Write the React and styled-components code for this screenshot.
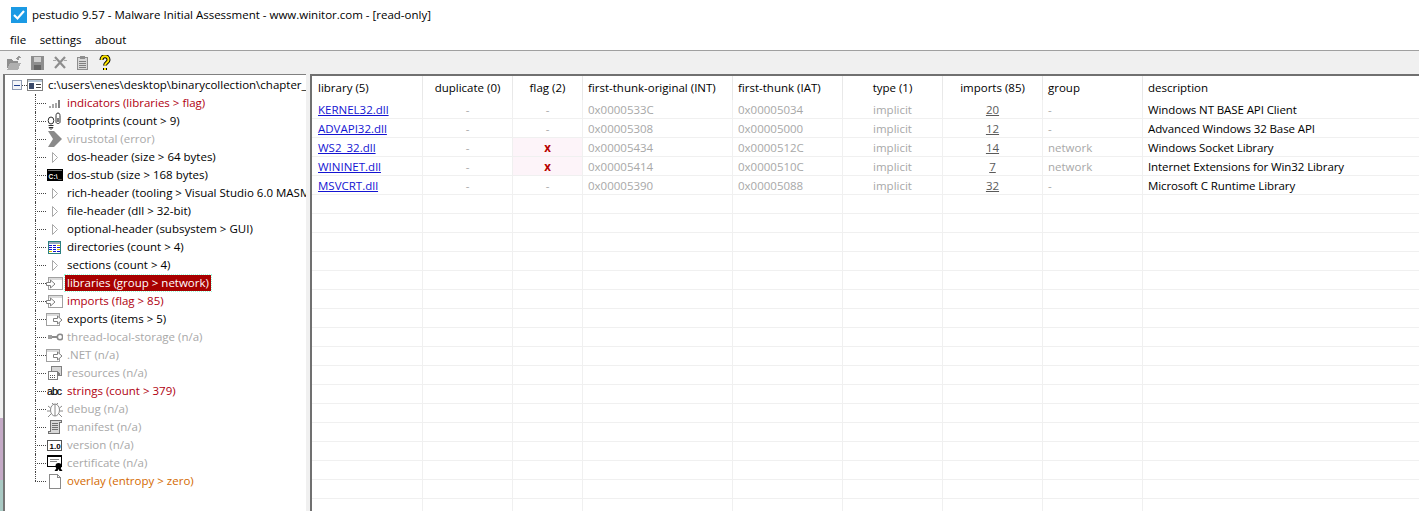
import React from 'react';
import styled, { createGlobalStyle } from 'styled-components';

const GlobalStyle = createGlobalStyle`
  html, body {
    margin: 0;
    padding: 0;
    background: #f0f0f0;
  }
  body {
    font-family: "Open Sans", "Liberation Sans", sans-serif;
    font-size: 11.5px;
    color: #000;
  }
  svg {
    display: block;
    flex: none;
  }
`;

const Window = styled.div`
  display: flex;
  flex-direction: column;
  height: 100vh;
  overflow: hidden;
`;

const TitleBar = styled.div`
  display: flex;
  align-items: center;
  gap: 5px;
  height: 30px;
  padding: 0 0 1px 11px;
  box-sizing: border-box;
  background: #fff;
  font-size: 11.5px;
`;

const MenuBar = styled.div`
  display: flex;
  gap: 13.5px;
  height: 20px;
  box-sizing: border-box;
  padding: 0 0 2px 10px;
  align-items: center;
  background: #fff;
`;

const Toolbar = styled.div`
  display: flex;
  align-items: center;
  height: 23px;
  padding-left: 3px;
  border-top: 1px solid #a0a0a0;
  background: #f0f0f0;
`;

const ToolButton = styled.span`
  display: flex;
  justify-content: center;
  width: 22.75px;
`;

// the 3px strip on the left shows the desktop colours behind the window
const Panes = styled.div`
  flex: 1;
  display: flex;
  gap: 4px;
  min-height: 0;
  padding-left: 3px;
  background:
    linear-gradient(to bottom, #f0f0f0 344px, #c4aac6 344px, #c4aac6 406px, #a9c9c3 406px) left top / 3px 100% no-repeat,
    #f0f0f0;
`;

const TreePane = styled.div`
  width: 301px;
  flex: none;
  padding-top: 1px;
  background: #fff;
  border-top: 1px solid #808080;
  border-left: 2px solid #757575;
  overflow: hidden;
`;

const TreeRow = styled.div`
  display: flex;
  align-items: center;
  height: 18px;
  white-space: nowrap;
`;

const RootRow = styled(TreeRow)`
  padding-left: 7px;
`;

const Expander = styled.span`
  display: flex;
  align-items: center;
  justify-content: center;
  flex: none;
  box-sizing: border-box;
  width: 10px;
  height: 10px;
  border: 1px solid #8f9bb3;
  background: #f2f4f8;

  &::after {
    content: '';
    width: 6px;
    height: 1px;
    background: #1f3f8f;
  }
`;

const RootStub = styled.span`
  flex: none;
  width: 5px;
  border-top: 1px dotted #444;
`;

const Branch = styled.span`
  position: relative;
  flex: none;
  align-self: stretch;
  width: 11px;
  margin-left: 30px;

  &::before {
    content: '';
    position: absolute;
    left: 0;
    top: 0;
    height: ${props => (props.$last ? '9px' : '18px')};
    border-left: 1px dotted #444;
  }

  &::after {
    content: '';
    position: absolute;
    left: 0;
    right: 0;
    top: 9px;
    border-top: 1px dotted #444;
  }
`;

const IconSlot = styled.span`
  display: flex;
  align-items: center;
  justify-content: center;
  flex: none;
  width: 17px;
  height: 18px;
  margin-right: 2px;
`;

const toneColors = {
  normal: '#000',
  red: '#b00010',
  muted: '#a8a8a8',
  orange: '#d46a00',
};

const TreeLabel = styled.span`
  box-sizing: border-box;
  padding: 0 2px;
  line-height: 16px;
  color: ${props => (props.$selected ? '#fff' : toneColors[props.$tone])};
  background: ${props => (props.$selected ? '#a80000' : 'transparent')};
  outline: ${props => (props.$selected ? '1px dotted #9fd' : 'none')};
`;

const RootLabel = styled.span`
  margin-left: 5px;
  line-height: 16px;
`;

const TablePane = styled.div`
  flex: 1;
  min-width: 0;
  background: #fff;
  border-top: 2px solid #707070;
  border-left: 2px solid #707070;
  overflow: hidden;
`;

const columnTemplate = '110px 90px 70px 150px 110px 100px 100px 100px 1fr';

const HeaderRow = styled.div`
  display: grid;
  grid-template-columns: ${columnTemplate};
  height: 24px;
`;

const HeaderCell = styled.div`
  display: flex;
  align-items: center;
  justify-content: ${props => (props.$center ? 'center' : 'flex-start')};
  padding: 0 0 2px ${props => (props.$center ? '0' : '5px')};
  border-left: 1px solid #e8e8e8;
  white-space: nowrap;
  overflow: hidden;

  &:first-child {
    border-left: none;
    padding-left: 6px;
  }
`;

const BodyRow = styled.div`
  display: grid;
  grid-template-columns: ${columnTemplate};
  box-sizing: border-box;
  height: 19px;
  border-bottom: 1px solid #f0f0f0;
`;

const Cell = styled.div`
  display: flex;
  align-items: center;
  justify-content: ${props => (props.$center ? 'center' : 'flex-start')};
  padding-left: ${props => (props.$center ? '0' : '5px')};
  border-left: 1px solid #f0f0f0;
  color: ${props => (props.$dark ? '#000' : '#a8a8a8')};
  background: ${props => (props.$flagged ? '#fdf4f9' : 'transparent')};
  white-space: nowrap;
  overflow: hidden;

  &:first-child {
    border-left: none;
    padding-left: 6px;
  }
`;

const DescriptionText = styled.span`
  letter-spacing: -0.1px;
`;

const LibraryLink = styled.span`
  color: #1414d2;
  text-decoration: underline;
`;

const ImportCount = styled.span`
  color: #5a5a5a;
  text-decoration: underline;
`;

const FlagMark = styled.span`
  color: #b80000;
  font-weight: 700;
`;

const Svg = ({ w = 16, h = 16, children }) => (
  <svg width={w} height={h} viewBox={`0 0 ${w} ${h}`} shapeRendering="crispEdges">
    {children}
  </svg>
);

// window with the arrow coming in from the left
const WindowIn = () => (
  <Svg w={17} h={15}>
    <path d="M2.500 1.500h14v12h-14z" fill="#fff" stroke="#a0a0a0" />
    <path d="M3 2h13v2H3z" fill="#dcdcdc" />
    <path d="M.5 6.500h4V4L9 8l-4.500 4V9.500h-4z" fill="#fff" stroke="#808080" shapeRendering="auto" />
  </Svg>
);

// window with the arrow leaving on the right
const WindowOut = () => (
  <Svg w={17} h={15}>
    <path d="M.5 1.500h13v12H.5z" fill="#fff" stroke="#a0a0a0" />
    <path d="M1 2h12v2H1z" fill="#dcdcdc" />
    <path d="M7.500 6.500h4V4L16 8l-4.500 4V9.500h-4z" fill="#fff" stroke="#808080" shapeRendering="auto" />
  </Svg>
);

const treeIcons = {
  indicators: () => (
    <Svg>
      <path d="M2 11h2v2H2zM5 9h2v4H5zM8 8h2v5H8z" fill="#a8a8a8" />
      <path d="M11 5h2v8h-2z" fill="#808080" />
    </Svg>
  ),
  footprints: () => (
    <Svg h={18}>
      <g fill="none" stroke="#303030" shapeRendering="auto">
        <ellipse cx="4" cy="8.500" rx="2.800" ry="3.500" />
        <path d="M1.500 13.500h5M2 15.500h4l-2 2z" />
        <path d="M11 1c-2 0-2 2-2 4v5c0 2 4 2 4 0V5c0-2 0-4-2-4z" />
      </g>
      <path d="M10 6h2v4h-2z" fill="#808080" />
    </Svg>
  ),
  virustotal: () => (
    <Svg h={16}>
      <path d="M1 0h6l8 8-8 8H1l5-8z" fill="#8a8a8a" shapeRendering="auto" />
    </Svg>
  ),
  triangle: () => (
    <Svg>
      <path d="M5.500 3.500v10l5-5z" fill="#fff" stroke="#a8a8a8" shapeRendering="auto" />
    </Svg>
  ),
  console: () => (
    <Svg>
      <path d="M0 2h16v12H0z" fill="#000" />
      <path d="M1 3h14v1H1z" fill="#777" />
      <text x="1.500" y="11.500" fontFamily="Liberation Sans" fontWeight="700" fontSize="6.500" fill="#fff" textLength="13">C:\_</text>
    </Svg>
  ),
  table: () => (
    <Svg h={15}>
      <path d="M1.500 1.500h12v12h-12z" fill="#fff" stroke="#2b8080" />
      <path d="M2 2h11v2H2z" fill="#9ab" />
      <path d="M2 5h3v1H2zM2 7h3v1H2zM2 9h3v1H2zM6 5h3v1H6zM6 7h3v1H6zM6 9h3v1H6z" fill="#1414c8" />
      <path d="M10 5h3v1h-3zM10 9h3v1h-3zM2 11h3v1H2z" fill="#d8c000" />
      <path d="M10 7h3v1h-3zM6 11h3v1H6zM10 11h3v1h-3z" fill="#1414c8" />
    </Svg>
  ),
  windowIn: WindowIn,
  windowOut: WindowOut,
  key: () => (
    <Svg>
      <circle cx="13" cy="8" r="2.700" fill="#fff" stroke="#8a8a8a" strokeWidth="1.600" shapeRendering="auto" />
      <path d="M4 7h6v2H4z" fill="#8a8a8a" />
      <path d="M1 6h4v4H1z" fill="#a0a0a0" />
    </Svg>
  ),
  resources: () => (
    <Svg>
      <path d="M4.500 1.500h10v9h-10z" fill="#d8d8d8" stroke="#808080" />
      <path d="M1.500 6.500h9v8h-9z" fill="#fff" stroke="#808080" />
      <path d="M3 10h1v1H3zM5 10h1v1H5zM7 10h1v1H7zM3 12h1v1H3zM5 12h1v1H5zM7 12h1v1H7z" fill="#555" />
      <path d="M11 7l3 2-3 2z" fill="#808080" />
    </Svg>
  ),
  abc: () => (
    <Svg>
      <text x="0" y="12" fontFamily="Liberation Sans" fontSize="10.500" fill="#000" stroke="#000" strokeWidth="0.200" textLength="15">abc</text>
    </Svg>
  ),
  bug: () => (
    <Svg h={18}>
      <g fill="none" stroke="#8a8a8a" shapeRendering="auto">
        <ellipse cx="8" cy="10" rx="4.500" ry="6" fill="#fff" />
        <path d="M8 4v12M5 3l2 2M11 3L9 5M3.500 8L1 6M12.500 8L15 6M3 11H0M13 11h3M4 14l-3 3M12 14l3 3" />
      </g>
    </Svg>
  ),
  manifest: () => (
    <Svg>
      <path d="M3.500 1.500h11v2h-2v11h-11v-2h2z" fill="#d8d8d8" stroke="#707070" />
      <path d="M5 4h6v1H5zM5 6h6v1H5zM5 8h6v1H5zM5 10h6v1H5z" fill="#707070" />
    </Svg>
  ),
  version: () => (
    <Svg>
      <path d="M.5 3.500h14v10H.5z" fill="#fff" stroke="#555" />
      <text x="2.500" y="11.500" fontFamily="Liberation Sans" fontSize="8" fontWeight="700" fill="#000">1.0</text>
    </Svg>
  ),
  certificate: () => (
    <Svg h={18}>
      <path d="M0 1h15v12H0z" fill="#000" />
      <path d="M1 3h13v9H1z" fill="#fff" />
      <path d="M3 5h9v1H3zM3 7h7v1H3z" fill="#888" />
      <circle cx="11.500" cy="12" r="3" fill="#000" shapeRendering="auto" />
      <path d="M9.500 14l-2 3h3l1-2 1 2h3l-2-3z" fill="#000" shapeRendering="auto" />
    </Svg>
  ),
  page: () => (
    <Svg>
      <path d="M2.500 1.500h8l3 3v11h-11z" fill="#fff" stroke="#8a8a8a" />
      <path d="M10.500 1.500v3h3" fill="none" stroke="#8a8a8a" />
    </Svg>
  ),
};

const RootIcon = () => (
  <Svg>
    <path d="M.5 2.500h15v11H.5z" fill="#fff" stroke="#808080" />
    <path d="M1 3h14v2H1z" fill="#b8c8d8" />
    <path d="M2 6h5v6H2z" fill="#3a4a6a" />
    <path d="M9 7h5v1H9zM9 10h5v1H9z" fill="#444" />
  </Svg>
);

const treeItems = [
  { icon: 'indicators', text: 'indicators (libraries > flag)', tone: 'red' },
  { icon: 'footprints', text: 'footprints (count > 9)', tone: 'normal' },
  { icon: 'virustotal', text: 'virustotal (error)', tone: 'muted' },
  { icon: 'triangle', text: 'dos-header (size > 64 bytes)', tone: 'normal' },
  { icon: 'console', text: 'dos-stub (size > 168 bytes)', tone: 'normal' },
  { icon: 'triangle', text: 'rich-header (tooling > Visual Studio 6.0 MASM)', tone: 'normal' },
  { icon: 'triangle', text: 'file-header (dll > 32-bit)', tone: 'normal' },
  { icon: 'triangle', text: 'optional-header (subsystem > GUI)', tone: 'normal' },
  { icon: 'table', text: 'directories (count > 4)', tone: 'normal' },
  { icon: 'triangle', text: 'sections (count > 4)', tone: 'normal' },
  { icon: 'windowIn', text: 'libraries (group > network)', tone: 'red', selected: true },
  { icon: 'windowIn', text: 'imports (flag > 85)', tone: 'red' },
  { icon: 'windowOut', text: 'exports (items > 5)', tone: 'normal' },
  { icon: 'key', text: 'thread-local-storage (n/a)', tone: 'muted' },
  { icon: 'windowOut', text: '.NET (n/a)', tone: 'muted' },
  { icon: 'resources', text: 'resources (n/a)', tone: 'muted' },
  { icon: 'abc', text: 'strings (count > 379)', tone: 'red' },
  { icon: 'bug', text: 'debug (n/a)', tone: 'muted' },
  { icon: 'manifest', text: 'manifest (n/a)', tone: 'muted' },
  { icon: 'version', text: 'version (n/a)', tone: 'muted' },
  { icon: 'certificate', text: 'certificate (n/a)', tone: 'muted' },
  { icon: 'page', text: 'overlay (entropy > zero)', tone: 'orange' },
];

const columns = [
  { title: 'library (5)' },
  { title: 'duplicate (0)', center: true },
  { title: 'flag (2)', center: true },
  { title: 'first-thunk-original (INT)' },
  { title: 'first-thunk (IAT)' },
  { title: 'type (1)', center: true },
  { title: 'imports (85)', center: true },
  { title: 'group' },
  { title: 'description' },
];

const libraries = [
  { name: 'KERNEL32.dll', int: '0x0000533C', iat: '0x00005034', imports: 20, group: '-', description: 'Windows NT BASE API Client' },
  { name: 'ADVAPI32.dll', int: '0x00005308', iat: '0x00005000', imports: 12, group: '-', description: 'Advanced Windows 32 Base API' },
  { name: 'WS2_32.dll', flagged: true, int: '0x00005434', iat: '0x0000512C', imports: 14, group: 'network', description: 'Windows Socket Library' },
  { name: 'WININET.dll', flagged: true, int: '0x00005414', iat: '0x0000510C', imports: 7, group: 'network', description: 'Internet Extensions for Win32 Library' },
  { name: 'MSVCRT.dll', int: '0x00005390', iat: '0x00005088', imports: 32, group: '-', description: 'Microsoft C Runtime Library' },
];

const emptyRows = Array.from({ length: 17 }, (_, i) => i);

function App() {
  return (
    <Window>
      <GlobalStyle />
      <TitleBar>
        <Svg>
          <path d="M0 0h16v16H0z" fill="#1b9ae4" />
          <path d="M3 8l3.500 3.500L13 4" fill="none" stroke="#fff" strokeWidth="2.200" shapeRendering="auto" />
        </Svg>
        <span>pestudio 9.57 - Malware Initial Assessment - www.winitor.com - [read-only]</span>
      </TitleBar>
      <MenuBar>
        <span>file</span>
        <span>settings</span>
        <span>about</span>
      </MenuBar>
      <Toolbar>
        <ToolButton>
          <Svg>
            <path d="M1 4h5l1 2h5v2H4l-3 6z" fill="#8e8e8e" />
            <path d="M4 8h11l-3 7H1z" fill="#b0b0b0" />
            <path d="M10 3l3-2 2 2h-2v2h-2z" fill="#999" />
          </Svg>
        </ToolButton>
        <ToolButton>
          <Svg w={15}>
            <path d="M1 1h13v14H1z" fill="#8e8e8e" />
            <path d="M4 2h7v5H4z" fill="#d0d0d0" />
            <path d="M4 10h7v5H4z" fill="#666" />
          </Svg>
        </ToolButton>
        <ToolButton>
          <Svg>
            <path d="M3 2l10 11M13 2L3 13" stroke="#8e8e8e" strokeWidth="2.200" fill="none" shapeRendering="auto" />
            <path d="M1 5h3M12 5h3" stroke="#aaa" fill="none" />
          </Svg>
        </ToolButton>
        <ToolButton>
          <Svg w={15}>
            <path d="M2.500 2.500h10v12h-10z" fill="#d8d8d8" stroke="#8e8e8e" />
            <path d="M5 1h5v3H5z" fill="#8e8e8e" />
            <path d="M4 6h7v1H4zM4 8h7v1H4zM4 10h7v1H4zM4 12h7v1H4z" fill="#808080" />
          </Svg>
        </ToolButton>
        <ToolButton>
          <Svg w={14}>
            <path d="M3.500 5c0-5 7-5 7 0 0 2.500-3.500 2.500-3.500 5.500" fill="none" stroke="#000" strokeWidth="4" shapeRendering="auto" />
            <path d="M7 12.500v2.500" stroke="#000" strokeWidth="4" fill="none" />
            <path d="M3.500 5c0-5 7-5 7 0 0 2.500-3.500 2.500-3.500 5.500" fill="none" stroke="#ffe600" strokeWidth="2" shapeRendering="auto" />
            <path d="M6 13h2v2H6z" fill="#ffe600" />
          </Svg>
        </ToolButton>
      </Toolbar>
      <Panes>
        <TreePane>
          <RootRow>
            <Expander />
            <RootStub />
            <RootIcon />
            <RootLabel>c:\users\enes\desktop\binarycollection\chapter_</RootLabel>
          </RootRow>
          {treeItems.map((item, index) => {
            const Icon = treeIcons[item.icon];
            return (
              <TreeRow key={item.text}>
                <Branch $last={index === treeItems.length - 1} />
                <IconSlot>
                  <Icon />
                </IconSlot>
                <TreeLabel $tone={item.tone} $selected={item.selected}>
                  {item.text}
                </TreeLabel>
              </TreeRow>
            );
          })}
        </TreePane>
        <TablePane>
          <HeaderRow>
            {columns.map(col => (
              <HeaderCell key={col.title} $center={col.center}>
                {col.title}
              </HeaderCell>
            ))}
          </HeaderRow>
          {libraries.map(lib => (
            <BodyRow key={lib.name}>
              <Cell>
                <LibraryLink>{lib.name}</LibraryLink>
              </Cell>
              <Cell $center>-</Cell>
              <Cell $center $flagged={lib.flagged}>
                {lib.flagged ? <FlagMark>x</FlagMark> : '-'}
              </Cell>
              <Cell>{lib.int}</Cell>
              <Cell>{lib.iat}</Cell>
              <Cell $center>implicit</Cell>
              <Cell $center>
                <ImportCount>{lib.imports}</ImportCount>
              </Cell>
              <Cell>{lib.group}</Cell>
              <Cell $dark>
                <DescriptionText>{lib.description}</DescriptionText>
              </Cell>
            </BodyRow>
          ))}
          {emptyRows.map(i => (
            <BodyRow key={i}>
              {columns.map(col => (
                <Cell key={col.title} />
              ))}
            </BodyRow>
          ))}
        </TablePane>
      </Panes>
    </Window>
  );
}

export default App;
